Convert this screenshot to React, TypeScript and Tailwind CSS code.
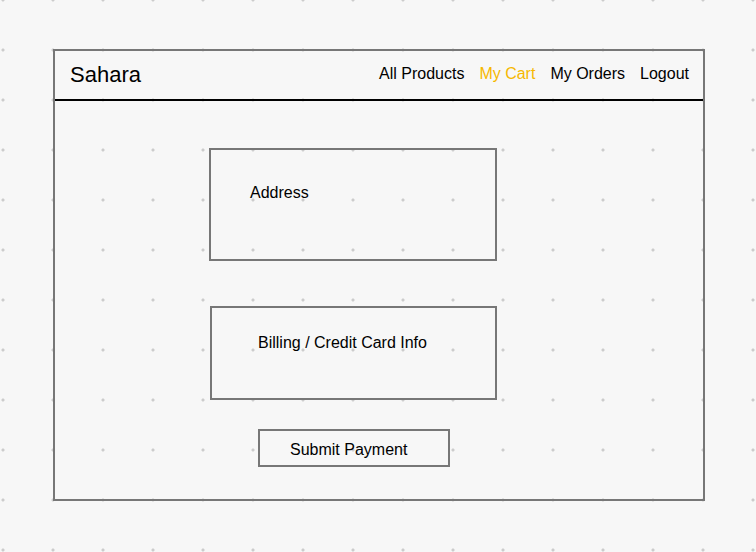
const navLinks = [
	{ label: "All Products", active: false },
	{ label: "My Cart", active: true },
	{ label: "My Orders", active: false },
	{ label: "Logout", active: false },
];

const App = () => {
	return (
		<div className="min-h-screen w-full bg-[#f7f7f7] bg-[radial-gradient(circle,#cccccc_1.3px,transparent_1.8px)] bg-size-[50px_50px] bg-position-[-22px_-25px] pt-[49px] pl-[53px] font-['Liberation_Sans',Arial,sans-serif] text-black">
			<div className="flex flex-col w-[652px] h-[452px] border-2 border-[#777]">
				{/* header */}
				<div className="flex items-center justify-between h-[50px] border-b-2 border-black pl-[15px] pr-[14px] pb-[2px]">
					<p className="text-[22px]">Sahara</p>
					<div className="flex items-center gap-[15px] text-[16px]">
						{navLinks.map((link) => (
							<p key={link.label} className={link.active ? "text-[#f6b800]" : "text-black"}>
								{link.label}
							</p>
						))}
					</div>
				</div>

				{/* checkout */}
				<div className="flex flex-col pl-[154px] pt-[47px] text-[16px] leading-[20px]">
					<div className="w-[288px] h-[113px] border-2 border-[#777] pl-[39px] pt-[33px]">
						<p>Address</p>
					</div>
					<div className="w-[287px] h-[94px] mt-[45px] ml-px border-2 border-[#777] pl-[46px] pt-[25px]">
						<p>Billing / Credit Card Info</p>
					</div>
					<button className="flex items-center w-[192px] h-[38px] mt-[29px] ml-[49px] border-2 border-[#777] pl-[30px] pt-[3px] text-[16px]">
						Submit Payment
					</button>
				</div>
			</div>
		</div>
	);
};

export default App;
